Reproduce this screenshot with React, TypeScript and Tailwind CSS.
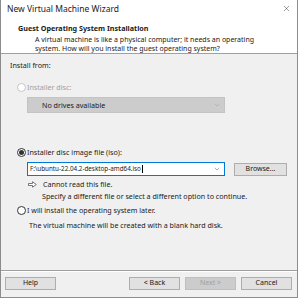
import { X, ChevronDown } from 'lucide-react';

// Small Windows-style radio button
function Radio({ checked, disabled }: { checked?: boolean; disabled?: boolean }) {
  return (
    <span
      className={`flex h-[9px] w-[9px] shrink-0 items-center justify-center rounded-full border ${
        disabled ? 'border-[#c5c5c5] bg-white' : 'border-[#333333] bg-white'
      }`}
    >
      {checked && <span className="h-[5px] w-[5px] rounded-full bg-[#333333]" />}
    </span>
  );
}

function Button({ label, disabled, width = 'w-[51px]' }: { label: string; disabled?: boolean; width?: string }) {
  return (
    <div
      className={`flex h-[13px] ${width} items-center justify-center border text-[7px] ${
        disabled ? 'border-[#bfbfbf] bg-[#cccccc] text-[#a0a0a0]' : 'border-[#adadad] bg-[#e1e1e1] text-[#1a1a1a]'
      }`}
    >
      {label}
    </div>
  );
}

export default function App() {
  return (
    <div className="h-[300px] w-[300px] overflow-hidden bg-white" style={{ fontFamily: '"Noto Sans", "Open Sans", sans-serif' }}>
      <div className="flex h-[298px] w-[298px] flex-col border-x border-b border-[#8c8c8c] bg-[#f0f0f0] text-[#1a1a1a]">
        {/* Title bar */}
        <div className="flex h-[17px] shrink-0 items-center justify-between bg-white pl-[6px] pr-[6px]">
          <span className="text-[8.5px] leading-[17px] text-[#222]">New Virtual Machine Wizard</span>
          <X size={9} strokeWidth={1.3} className="text-[#333]" />
        </div>

        {/* Header */}
        <div className="h-[36px] shrink-0 bg-white pt-[6px]">
          <div className="pl-[17px] text-[7.2px] font-bold leading-[10px]">Guest Operating System Installation</div>
          <div className="mt-[2px] pl-[34px] text-[7px] leading-[9px]">
            A virtual machine is like a physical computer; it needs an operating
            <br />
            system. How will you install the guest operating system?
          </div>
        </div>
        <div className="h-px shrink-0 bg-[#a0a0a0]" />

        {/* Body */}
        <div className="flex flex-1 flex-col pl-[9px] pt-[6px] text-[7.15px]">
          <div className="leading-[10px]">Install from:</div>

          <div className="mt-[12px] flex h-[10px] items-center gap-[1px] pl-[7px] text-[#a0a0a0]">
            <Radio disabled />
            <span className="leading-[10px]">Installer disc:</span>
          </div>
          <div className="ml-[17px] mt-[5px] flex h-[16px] w-[198px] items-center justify-between border border-[#c4c4c4] bg-[#cccccc] pl-[14px] pr-[3px]">
            <span className="leading-[10px]">No drives available</span>
            <ChevronDown size={8} strokeWidth={1.5} className="text-[#a0a0a0]" />
          </div>

          <div className="mt-[34px] flex h-[10px] items-center gap-[1px] pl-[7px]">
            <Radio checked />
            <span className="leading-[10px]">Installer disc image file (iso):</span>
          </div>
          <div className="mt-[5px] flex items-center">
            <div className="ml-[17px] flex h-[14px] w-[198px] items-center justify-between border border-[#0078d7] bg-white pl-[2px] pr-[3px]">
              <span className="text-[6.3px] leading-[10px]">
                F:\ubuntu-22.04.2-desktop-amd64.iso
                <span className="ml-px inline-block h-[8px] w-px bg-black align-middle" />
              </span>
              <ChevronDown size={8} strokeWidth={1.5} className="text-[#606060]" />
            </div>
            <div className="ml-[9px]">
              <Button label="Browse..." width="w-[53px]" />
            </div>
          </div>

          <div className="mt-[2px] flex h-[12px] items-center pl-[18px]">
            <svg width="9" height="7" viewBox="0 0 9 7" className="shrink-0">
              <path d="M0.5 2.5 H4.5 V0.8 L8.3 3.5 L4.5 6.2 V4.5 H0.5 Z" fill="white" stroke="#555" strokeWidth="0.8" />
            </svg>
            <span className="ml-[6px] leading-[12px]">Cannot read this file.</span>
          </div>
          <div className="h-[12px] pl-[32px] leading-[12px]">Specify a different file or select a different option to continue.</div>

          <div className="mt-[3px] flex h-[10px] items-center gap-[1px] pl-[7px]">
            <Radio />
            <span className="leading-[10px]">I will install the operating system later.</span>
          </div>
          <div className="mt-[5px] pl-[19px] leading-[10px]">The virtual machine will be created with a blank hard disk.</div>
        </div>

        {/* Footer */}
        <div className="h-px shrink-0 bg-[#a0a0a0]" />
        <div className="h-px shrink-0 bg-white" />
        <div className="flex h-[25px] shrink-0 items-start pl-[4px] pr-[5px] pt-[5px]">
          <Button label="Help" />
          <div className="flex-1" />
          <div className="flex gap-[5px]">
            <Button label="< Back" />
            <Button label="Next >" disabled />
            <Button label="Cancel" />
          </div>
        </div>
      </div>
    </div>
  );
}
